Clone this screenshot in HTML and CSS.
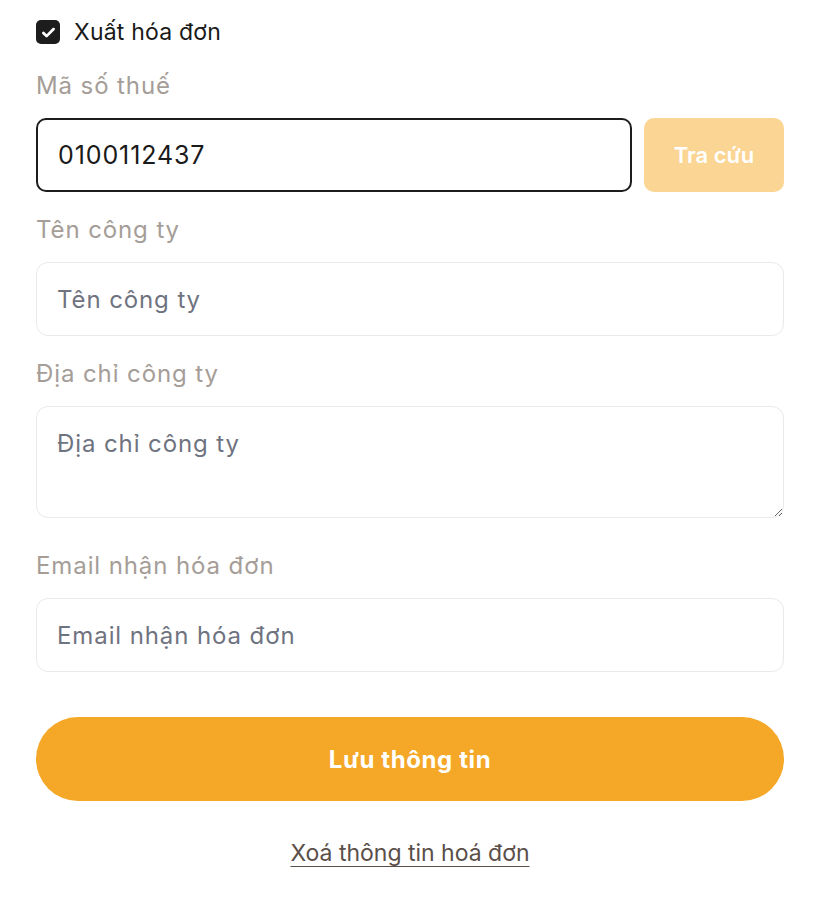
FILE: index.html
```html
<!DOCTYPE html>
<html lang="vi">

<head>
  <meta charset="UTF-8">
  <meta name="viewport" content="width=device-width, initial-scale=1.0">
  <title>Xuất hóa đơn</title>
  <link rel="stylesheet" href="styles.css">
</head>

<body>
  <form class="invoice-form">
    <label class="check-row">
      <span class="check-box">
        <svg width="17" height="17" viewBox="0 0 16 16"><path d="M3.2 8.4l3 3L12.8 4.8" fill="none" stroke="#fff" stroke-width="2.6" stroke-linecap="round" stroke-linejoin="round"/></svg>
      </span>
      <span class="check-text">Xuất hóa đơn</span>
    </label>

    <div class="field">
      <div class="label">Mã số thuế</div>
      <div class="tax-row">
        <input class="input input-active" type="text" value="0100112437">
        <button type="button" class="lookup-btn">Tra cứu</button>
      </div>
    </div>

    <div class="field">
      <div class="label">Tên công ty</div>
      <input class="input" type="text" placeholder="Tên công ty">
    </div>

    <div class="field field-area">
      <div class="label">Địa chỉ công ty</div>
      <textarea class="input textarea" placeholder="Địa chỉ công ty"></textarea>
    </div>

    <div class="field">
      <div class="label">Email nhận hóa đơn</div>
      <input class="input" type="text" placeholder="Email nhận hóa đơn">
    </div>

    <button type="button" class="save-btn">Lưu thông tin</button>

    <p class="clear-link"><a href="#">Xoá thông tin hoá đơn</a></p>
  </form>
</body>

</html>
```

FILE: styles.css
```css
body {
  margin: 0;
  background-color: #fff;
  font-family: "Inter", "Noto Sans", Arial, sans-serif;
  color: #1a1a1a;
}

.invoice-form {
  padding: 18px 36px 0 36px;
}

.check-row {
  display: flex;
  align-items: center;
  gap: 14px;
  height: 28px;
  margin-bottom: 26px;
  cursor: pointer;
}

.check-box {
  width: 24px;
  height: 24px;
  border-radius: 5px;
  background-color: #1d1d1d;
  display: flex;
  justify-content: center;
  align-items: center;
}

.check-text {
  font-size: 23px;
  letter-spacing: 0.2px;
  color: #1a1a1a;
}

.field {
  margin-bottom: 24px;
}

.field-area {
  margin-bottom: 34px;
}

.label {
  font-size: 24px;
  line-height: 28px;
  letter-spacing: 0.9px;
  color: #a59d97;
  margin-bottom: 18px;
}

.tax-row {
  display: flex;
  gap: 12px;
}

.input {
  display: block;
  box-sizing: border-box;
  width: 100%;
  height: 74px;
  padding: 0 20px;
  border: 1px solid #e9e9e9;
  border-radius: 12px;
  font-family: "Inter", "Noto Sans", Arial, sans-serif;
  font-size: 24px;
  letter-spacing: 0.9px;
  color: #1a1a1a;
  background-color: #fff;
  outline: none;
}

.input::placeholder {
  color: #6f7380;
}

.input-active {
  flex: 1;
  border: 2px solid #1d1d1d;
  border-radius: 10px;
  font-size: 25px;
  letter-spacing: 0.9px;
}

.textarea {
  height: 112px;
  padding: 22px 20px;
  resize: vertical;
}

.lookup-btn {
  width: 140px;
  height: 74px;
  border: 0;
  border-radius: 10px;
  background-color: #fad594;
  color: #fff;
  font-family: "Inter", "Noto Sans", Arial, sans-serif;
  font-size: 22px;
  font-weight: 600;
  cursor: not-allowed;
}

.save-btn {
  display: block;
  width: 100%;
  height: 84px;
  margin-top: 45px;
  border: 0;
  border-radius: 42px;
  background-color: #f5a727;
  color: #fff;
  font-family: "Inter", "Noto Sans", Arial, sans-serif;
  font-size: 24px;
  font-weight: 700;
  letter-spacing: 0.6px;
  cursor: pointer;
}

.clear-link {
  margin: 38px 0 0 0;
  text-align: center;
  font-size: 23px;
  line-height: 28px;
}

.clear-link a {
  color: #5a4f49;
  text-underline-offset: 5px;
}
```
